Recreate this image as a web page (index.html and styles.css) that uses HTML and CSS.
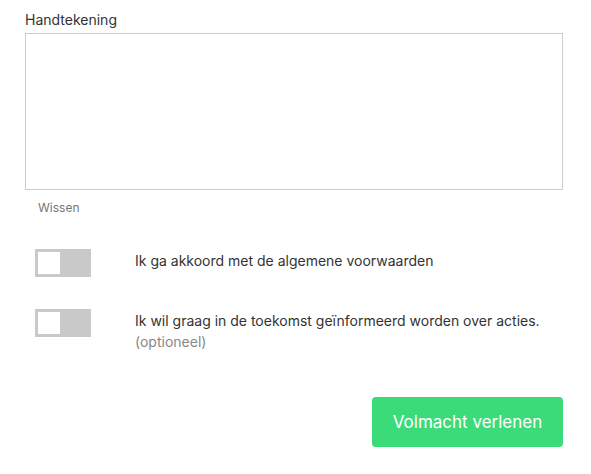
FILE: index.html
```html
<!DOCTYPE html>
<html lang="nl">
<head>
<meta charset="utf-8">
<link rel="stylesheet" href="styles.css">
</head>
<body>
<form class="form">
  <label class="label">Handtekening</label>
  <div class="canvas"></div>
  <div class="clear">Wissen</div>

  <div class="row row-first">
    <span class="toggle"><span class="knob"></span></span>
    <div class="row-text">Ik ga akkoord met de algemene voorwaarden</div>
  </div>

  <div class="row row-second">
    <span class="toggle"><span class="knob"></span></span>
    <div class="row-text">Ik wil graag in de toekomst geïnformeerd worden over acties.<br><span class="muted">(optioneel)</span></div>
  </div>

  <div class="actions">
    <button type="button" class="btn">Volmacht verlenen</button>
  </div>
</form>
</body>
</html>
```

FILE: styles.css
```css
html, body {
  margin: 0;
  padding: 0;
  background: #ffffff;
}
body {
  font-family: Inter, "Noto Sans", "Liberation Sans", sans-serif;
  color: #333333;
}
.form {
  padding: 12px 28px 0 25px;
  display: flex;
  flex-direction: column;
}
.label {
  display: block;
  font-size: 14px;
  line-height: 16px;
  color: #333333;
}
.canvas {
  margin-top: 5px;
  height: 157px;
  border: 1px solid #cccccc;
  box-sizing: border-box;
}
.clear {
  margin-top: 11px;
  margin-left: 13px;
  font-size: 12px;
  line-height: 14px;
  color: #777777;
}
.row {
  display: flex;
  align-items: flex-start;
  padding-left: 10px;
}
.row-first {
  margin-top: 34px;
}
.row-second {
  margin-top: 32px;
}
.toggle {
  flex: 0 0 auto;
  width: 56px;
  height: 28px;
  background: #c9c9c9;
  box-sizing: border-box;
  padding: 3px;
  display: flex;
}
.knob {
  width: 22px;
  height: 22px;
  background: #ffffff;
}
.row-text {
  margin-left: 44px;
  padding-top: 1px;
  font-size: 14px;
  line-height: 21px;
  color: #333333;
}
.muted {
  color: #888888;
}
.actions {
  display: flex;
  justify-content: flex-end;
  margin-top: 45px;
}
.btn {
  width: 191px;
  height: 50px;
  border: none;
  border-radius: 4px;
  background: #3cdb7a;
  color: #ffffff;
  font-family: Inter, "Noto Sans", "Liberation Sans", sans-serif;
  font-size: 17px;
  padding: 0;
  cursor: pointer;
}
```
